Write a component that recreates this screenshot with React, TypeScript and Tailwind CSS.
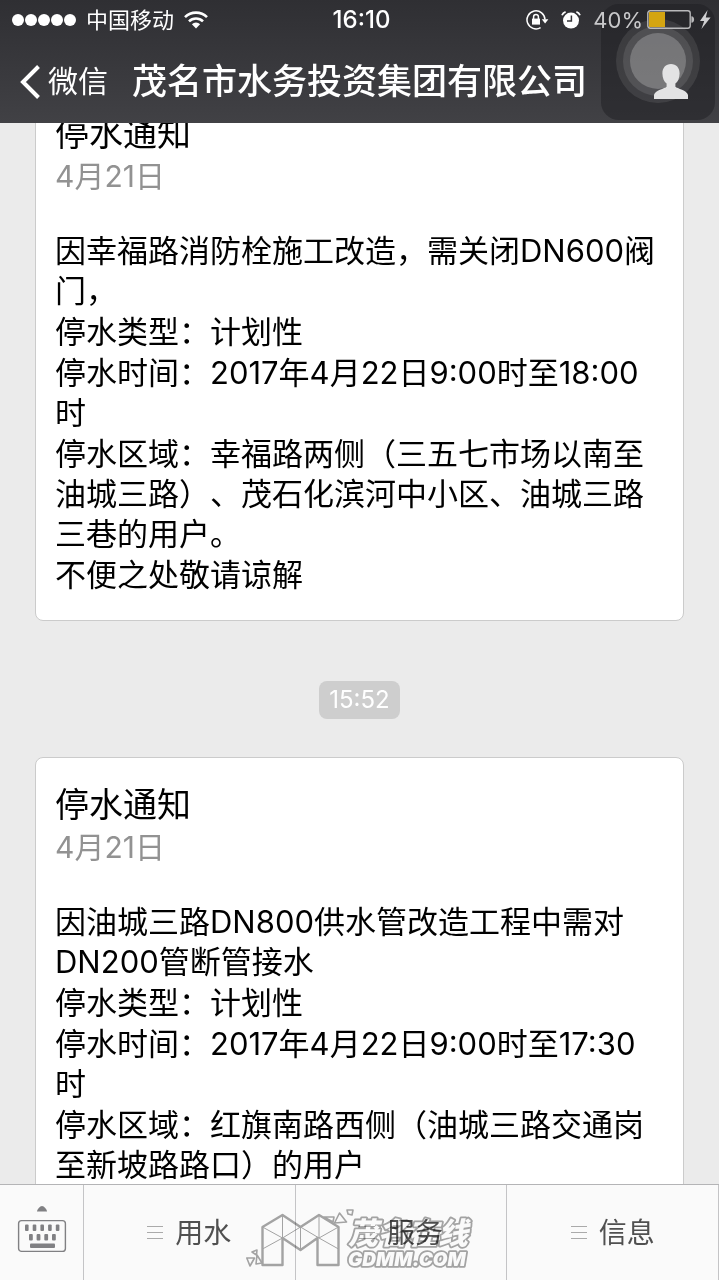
import type { ReactNode } from 'react'

interface Notice {
  title: string
  date: string
  lines: string[]
}

const NOTICES: Notice[] = [
  {
    title: '停水通知',
    date: '4月21日',
    lines: [
      '因幸福路消防栓施工改造，需关闭DN600阀门，',
      '停水类型：计划性',
      '停水时间：2017年4月22日9:00时至18:00时',
      '停水区域：幸福路两侧（三五七市场以南至油城三路）、茂石化滨河中小区、油城三路三巷的用户。',
      '不便之处敬请谅解',
    ],
  },
  {
    title: '停水通知',
    date: '4月21日',
    lines: [
      '因油城三路DN800供水管改造工程中需对DN200管断管接水',
      '停水类型：计划性',
      '停水时间：2017年4月22日9:00时至17:30时',
      '停水区域：红旗南路西侧（油城三路交通岗至新坡路路口）的用户',
    ],
  },
]

const MENU = ['用水', '服务', '信息']

function WifiIcon() {
  return (
    <svg width="24" height="18" viewBox="0 0 24 18" fill="none" stroke="currentColor" strokeWidth="2.6">
      <path d="M1 6.2a15.6 15.6 0 0 1 22 0" />
      <path d="M5 10.4a9.9 9.9 0 0 1 14 0" />
      <path d="M12 17.4 7.9 13.2a5.8 5.8 0 0 1 8.2 0z" fill="currentColor" stroke="none" />
    </svg>
  )
}

function LockIcon() {
  return (
    <svg width="23" height="20" viewBox="0 0 23 20" fill="none" stroke="currentColor" strokeWidth="1.5">
      <path d="M14.6 17.6A9 9 0 1 1 19 9.6" />
      <path d="M15.8 9.2h6.6l-3.3 4.4z" fill="currentColor" stroke="none" />
      <rect x="6" y="8.6" width="8" height="6" fill="currentColor" stroke="none" />
      <path d="M7.6 9V6.8a2.4 2.4 0 0 1 4.8 0V9" />
    </svg>
  )
}

function AlarmIcon() {
  return (
    <svg width="20" height="20" viewBox="0 0 20 20" fill="none">
      <circle cx="10" cy="10.6" r="8" fill="currentColor" />
      <path d="M1 5.2C1.6 3.6 2.8 2.4 4.6 1.8M19 5.2c-.6-1.6-1.8-2.8-3.6-3.4" stroke="currentColor" strokeWidth="1.8" />
      <path d="M10.4 5.6V11H6" stroke="#333337" strokeWidth="1.5" />
    </svg>
  )
}

function BatteryIcon() {
  return (
    <svg width="48" height="20" viewBox="0 0 48 20" fill="none">
      <rect x="0.8" y="0.8" width="42.4" height="17.4" rx="2.4" stroke="#b9b9bb" strokeWidth="1.4" />
      <rect x="2" y="2" width="16" height="15" fill="#d4a512" />
      <path d="M44.4 6.2c3.6 0 3.6 6.6 0 6.6z" fill="#b9b9bb" />
    </svg>
  )
}

function BoltIcon() {
  return (
    <svg width="12" height="20" viewBox="0 0 12 20" fill="#d0d0d2">
      <path d="M8.6 0 1 11h4.2L2.4 19 11.6 7.6H6.8z" />
    </svg>
  )
}

function TouchBall() {
  return (
    <svg width="114" height="116" viewBox="0 0 114 116" aria-hidden="true">
      <rect width="114" height="116" rx="18" fill="#1e1e21" fillOpacity="0.5" />
      <circle cx="57" cy="57" r="42" fill="#fff" fillOpacity="0.09" />
      <circle cx="57" cy="57" r="35" fill="#fff" fillOpacity="0.1" />
      <circle cx="57" cy="57" r="28" fill="#fff" fillOpacity="0.22" />
    </svg>
  )
}

function PersonIcon() {
  return (
    <svg width="36" height="35" viewBox="0 0 36 35" fill="#e3e3e4">
      <path d="M18 0c5.2 0 8.6 3.7 8.6 9.4 0 4.8-1.9 8.3-4.2 10.2v3.2c1.5 1.6 12 3.8 12.6 8.2V35H1v-4c.6-4.4 11.1-6.6 12.6-8.2v-3.2c-2.3-1.9-4.2-5.4-4.2-10.2C9.4 3.7 12.8 0 18 0z" />
    </svg>
  )
}

function KeyboardIcon() {
  return (
    <svg width="50" height="50" viewBox="0 0 50 50" fill="#808083">
      <path d="M20 8.5c0-2 3-5.500 5-5.500s5 3.500 5 5.500z" />
      <rect x="1.6" y="17.6" width="46.8" height="30.8" rx="3" fill="none" stroke="#808083" strokeWidth="1.4" />
      {[8, 15.7, 23.4, 31.1, 38.8].map(x => (
        <rect key={x} x={x} y="21.5" width="3.6" height="6.5" rx="1" />
      ))}
      {[12, 19.6, 27.3, 35].map(x => (
        <rect key={x} x={x} y="31" width="3.8" height="6.5" rx="1" />
      ))}
      <rect x="13" y="40.5" width="25" height="4.5" rx="1" />
    </svg>
  )
}

function Watermark() {
  return (
    <svg width="228" height="66" viewBox="0 0 228 66" aria-hidden="true">
      <g fill="none" stroke="#a6a6a6" strokeLinejoin="round">
        <path d="M16.5 19 36.5 7l18 12L73 7l19.5 12v38h-21V30l-17 12-18-12v27h-20z" strokeWidth="2.4" />
        <path d="M36.5 7v23M54.5 19v23M73 7v23M16.5 19l20 11 18-11L73 30l19.5-11M16.5 41l20-11M73 30l19.5 11" />
        <path
          d="M78 9h10l-1 5zM93.5 5l7 9-12 1zM101 2h6l-1 5-4-1zM.8 50h7.7L4 58zM6 44l5-2-.5 5zM11 47l-1 9 6-1z"
          fill="#fff"
          strokeWidth="1.6"
        />
      </g>
      <g
        fill="#fff"
        stroke="#a6a6a6"
        strokeWidth="3.6"
        strokeLinejoin="round"
        paintOrder="stroke"
        className="font-[Inter,'Noto_Sans_CJK_SC',sans-serif] font-black italic"
      >
        <text x="102" y="36" fontSize="30">茂名在线</text>
        <text x="102" y="58" fontSize="19">GDMM.COM</text>
      </g>
    </svg>
  )
}

function StatusBar() {
  return (
    <div className="flex h-10 items-center justify-between pr-2 pl-3 text-[22px] leading-8">
      <div className="flex flex-1 items-center gap-[10px]">
        <span className="flex gap-px">
          {[0, 1, 2, 3, 4].map(i => (
            <span key={i} className="size-3 rounded-full bg-white" />
          ))}
        </span>
        <span>中国移动</span>
        <WifiIcon />
      </div>
      <span className="text-[24px] font-medium">16:10</span>
      <div className="flex flex-1 items-center justify-end text-white">
        <LockIcon />
        <span className="ml-3">
          <AlarmIcon />
        </span>
        <span className="ml-3 text-[#c8c8ca]">40%</span>
        <span className="ml-1">
          <BatteryIcon />
        </span>
        <span className="ml-1">
          <BoltIcon />
        </span>
      </div>
    </div>
  )
}

function NoticeCard({ notice }: { notice: Notice }) {
  return (
    <article className="rounded-lg border border-[#cbcbcb] bg-white px-[19px] pt-6 pb-[25px]">
      <h2 className="text-[34px] leading-[45px]">{notice.title}</h2>
      <p className="text-[30px] leading-10 text-[#929292]">{notice.date}</p>
      <div className="mt-[35px] flex flex-col gap-px text-[31px] leading-10">
        {notice.lines.map(line => (
          <p key={line}>{line}</p>
        ))}
      </div>
    </article>
  )
}

function MenuButton({ children }: { children: ReactNode }) {
  return (
    <button className="flex flex-1 items-center justify-center gap-3 border-r border-[#c4c4c6] text-[28px] text-[#505050]">
      <span className="flex flex-col gap-[5px]">
        <span className="h-px w-4 bg-[#aaa]" />
        <span className="h-px w-4 bg-[#aaa]" />
        <span className="h-px w-4 bg-[#aaa]" />
      </span>
      {children}
    </button>
  )
}

export default function App() {
  return (
    <div className="flex h-screen flex-col bg-[#ebebeb] font-[Inter,'Noto_Sans_CJK_SC',sans-serif] text-black [text-spacing-trim:space-all]">
      <header className="relative z-10 shrink-0 bg-linear-to-b from-[#2f2f33] to-[#414145] text-white">
        <div className="absolute top-1 right-1">
          <TouchBall />
        </div>
        <div className="relative">
          <StatusBar />
          <div className="grid h-[83px] grid-cols-[1fr_auto_1fr] items-center">
            <button className="flex items-center gap-2 pl-5 text-[30px]">
              <svg width="20" height="34" viewBox="0 0 20 34" fill="none" stroke="currentColor" strokeWidth="4">
                <path d="M18.5 1.5 3 17l15.5 15.5" />
              </svg>
              微信
            </button>
            <h1 className="text-[35px] font-medium whitespace-nowrap">茂名市水务投资集团有限公司</h1>
            <button aria-label="公众号资料" className="justify-self-end pr-[30px]">
              <PersonIcon />
            </button>
          </div>
        </div>
      </header>

      <main className="min-h-0 flex-1 overflow-hidden px-[35px]">
        {/* Scrolled so the first title runs under the header */}
        <div className="-mt-[37px]">
          <NoticeCard notice={NOTICES[0]} />
          <div className="mt-[60px] mb-[38px] flex justify-center">
            <time className="rounded-lg bg-[#cecece] px-[10px] text-[24px] leading-[38px] text-white">15:52</time>
          </div>
          <NoticeCard notice={NOTICES[1]} />
        </div>
      </main>

      <footer className="relative flex h-24 shrink-0 border-t border-[#b4b4b6] bg-[#fafafa]">
        <button aria-label="键盘" className="flex w-[84px] items-center justify-center border-r border-[#c4c4c6] pb-[10px]">
          <KeyboardIcon />
        </button>
        <nav className="flex flex-1">
          {MENU.map(item => (
            <MenuButton key={item}>{item}</MenuButton>
          ))}
        </nav>
        <div className="pointer-events-none absolute inset-0 flex items-end justify-center pb-[6px] mix-blend-multiply">
          <Watermark />
        </div>
      </footer>
    </div>
  )
}
